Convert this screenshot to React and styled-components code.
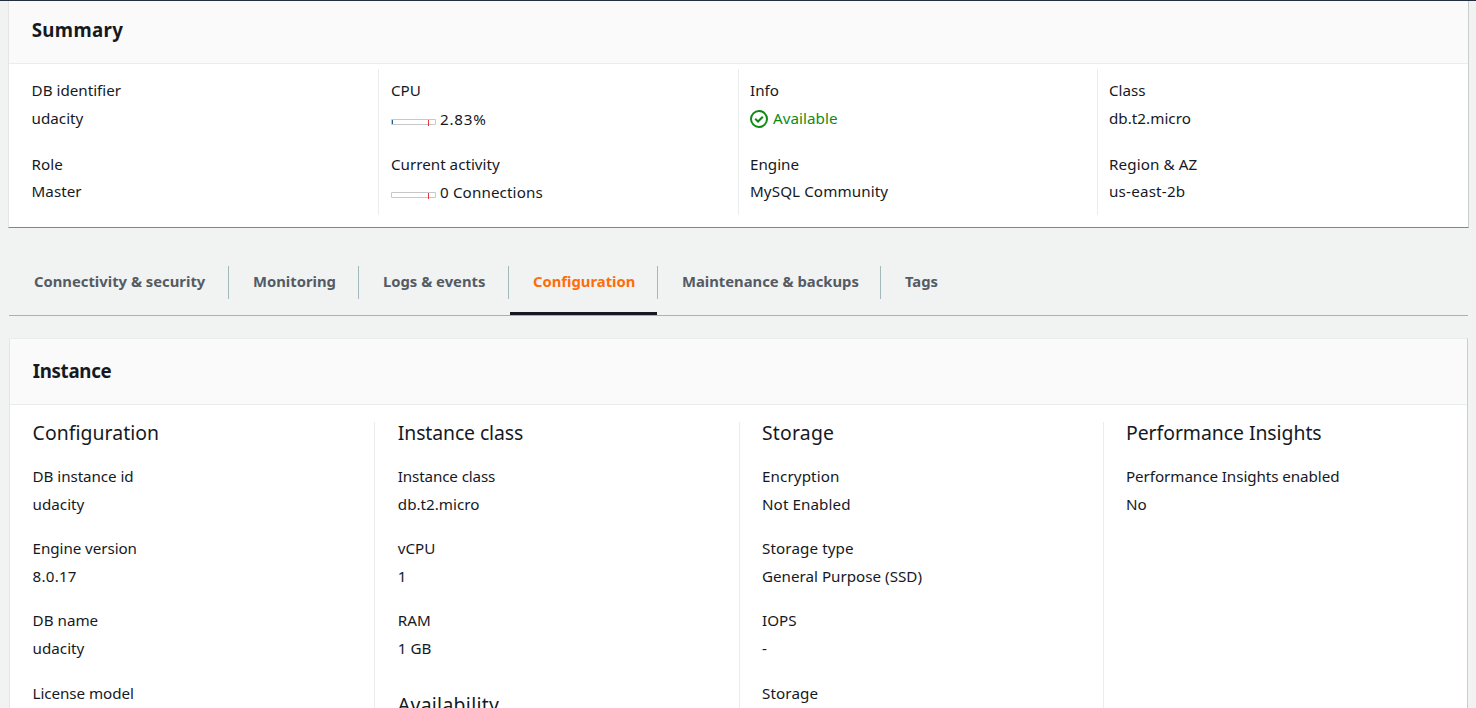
import React from "react";
import styled, { createGlobalStyle, css } from "styled-components";

const GlobalStyle = createGlobalStyle`
  * { box-sizing: border-box; }
  html, body { margin: 0; height: 100%; }
  body {
    overflow: hidden;
    background: #f1f3f3;
    color: #16191f;
    font-family: "Noto Sans", sans-serif;
    font-size: 15.2px;
    line-height: 22px;
  }
`;

const Page = styled.main`
  height: 708px;
  overflow: hidden;
  background: #f1f3f3;
  border-top: 1px solid #232f3e;
`;

const Panel = styled.section`
  background: #fff;
  border-left: 1px solid #e3e6e6;
  border-right: 1px solid #c9cdcd;
`;

const SummaryPanel = styled(Panel)`
  margin: 0 7px 0 8px;
  height: 227px;
  border-bottom: 1px solid #7f8889;
`;

const InstancePanel = styled(Panel)`
  margin: 22px 8px 0 9px;
  height: 500px;
  border-top: 1px solid #eaeded;
`;

const PanelHeader = styled.header`
  height: ${(p) => p.$height}px;
  padding: ${(p) => p.$top}px 0 0 22.7px;
  background: #fafafa;
  border-bottom: 1px solid #eaeded;
`;

const tracked = css`
  letter-spacing: ${(p) => (p.$track ? `${p.$track}px` : "normal")};
  white-space: nowrap;
`;

const PanelTitle = styled.h2`
  margin: 0;
  font-size: 18.7px;
  line-height: 26px;
  font-weight: 700;
  ${tracked}
`;

const Columns = styled.div`
  display: grid;
  grid-template-columns: ${(p) => p.$template};
  padding-top: ${(p) => p.$top}px;
`;

const SummaryColumn = styled.div`
  height: 146px;
  padding: 10px 0 0 ${(p) => p.$inset ?? 11}px;
  border-left: ${(p) => (p.$first ? "0" : "1px solid #eaeded")};
`;

const DetailColumn = styled.div`
  height: 420px;
  padding-left: ${(p) => p.$inset ?? 22}px;
  border-left: ${(p) => (p.$first ? "0" : "1px solid #eaeded")};
`;

const SummaryField = styled.div`
  height: 74px;
`;

const DetailField = styled.div`
  height: 72.25px;
`;

const Label = styled.div`
  height: 22px;
  margin-bottom: ${(p) => p.$gap ?? 6}px;
  ${tracked}
`;

const Value = styled.div`
  display: flex;
  align-items: center;
  height: 22px;
  ${tracked}
`;

const Status = styled(Value)`
  gap: 5px;
  color: #0d8a14;

  svg {
    margin-top: 2px;
  }
`;

const Metric = styled(Value)`
  gap: 4px;
  padding-top: 2px;
`;

const MeterSvg = styled.svg`
  display: block;
  margin-top: 7px;
`;

const ColumnTitle = styled.h3`
  margin: 0 0 18.9px;
  height: 24px;
  font-size: 19.4px;
  line-height: 22px;
  font-weight: 400;
  ${tracked}
`;

const LowerTitle = styled(ColumnTitle)`
  margin: 12px 0 0;
`;

const TabBar = styled.nav`
  display: flex;
  height: 88px;
  margin: 0 8px 0 9px;
  padding-top: 38px;
  border-bottom: 1px solid #a2b4b5;
`;

const Tab = styled.div`
  width: ${(p) => p.$width}px;
`;

const TabLabel = styled.div`
  height: 33px;
  padding-left: ${(p) => (p.$first ? 25 : 24)}px;
  border-right: ${(p) => (p.$last ? "0" : "1px solid #a2b8b9")};
  color: ${(p) => (p.$active ? "#ff6c0a" : "#545b64")};
  font-size: 14.8px;
  line-height: 30px;
  font-weight: 700;
  ${tracked}
`;

const TabMarker = styled.div`
  height: 3px;
  margin: 13px 1px 0;
  background: #16191f;
`;

function Meter({ used }) {
  return (
    <MeterSvg width="45" height="7" viewBox="0 0 45 7">
      <path d="M0.5 0.5H44.5V5.5H0.5Z" fill="#fff" stroke="#c8c8c8" />
      {used && <path d="M1.5 1V5" stroke="#1f5f96" />}
      <path d="M37.5 1V7" stroke="#e8363b" />
    </MeterSvg>
  );
}

function AvailableIcon() {
  return (
    <svg width="18" height="18" viewBox="0 0 18 18" fill="none" stroke="currentColor" strokeWidth="2">
      <circle cx="9" cy="9" r="8" />
      <path d="M5.2 8.8 8 11.5 12.8 6.7" />
    </svg>
  );
}

const tabs = [
  { text: "Connectivity & security", width: 220 },
  { text: "Monitoring", width: 130 },
  { text: "Logs & events", width: 150 },
  { text: "Configuration", width: 149, active: true },
  { text: "Maintenance & backups", width: 223 },
  { text: "Tags", width: 90 },
];

const details = [
  {
    title: "Configuration",
    track: 0.06,
    inset: 22.6,
    fields: [
      { label: "DB instance id", value: "udacity", track: -0.07 },
      { label: "Engine version", value: "8.0.17", track: -0.07, valueTrack: 0.2 },
      { label: "DB name", value: "udacity" },
      { label: "License model", track: -0.07 },
    ],
  },
  {
    title: "Instance class",
    track: -0.1,
    inset: 22.8,
    fields: [
      { label: "Instance class", value: "db.t2.micro", track: -0.13 },
      { label: "vCPU", value: "1" },
      { label: "RAM", value: "1 GB" },
    ],
    next: "Availability",
  },
  {
    title: "Storage",
    track: 0.2,
    fields: [
      { label: "Encryption", value: "Not Enabled", track: 0.1, valueTrack: 0.08 },
      { label: "Storage type", value: "General Purpose (SSD)", track: 0.1 },
      { label: "IOPS", value: "-" },
      { label: "Storage", track: 0.1 },
    ],
  },
  {
    title: "Performance Insights",
    track: -0.04,
    fields: [{ label: "Performance Insights enabled", value: "No", track: -0.07 }],
  },
];

export default function App() {
  return (
    <>
      <GlobalStyle />
      <Page>
        <SummaryPanel>
          <PanelHeader $height={63} $top={16}>
            <PanelTitle $track={0.35}>Summary</PanelTitle>
          </PanelHeader>
          <Columns $template="369px 360px 359px 1fr" $top={5}>
            <SummaryColumn $first $inset={22.6}>
              <SummaryField>
                <Label>DB identifier</Label>
                <Value>udacity</Value>
              </SummaryField>
              <SummaryField>
                <Label $gap={5}>Role</Label>
                <Value>Master</Value>
              </SummaryField>
            </SummaryColumn>
            <SummaryColumn $inset={12}>
              <SummaryField>
                <Label>CPU</Label>
                <Metric $track={0.8}><Meter used />2.83%</Metric>
              </SummaryField>
              <SummaryField>
                <Label $gap={5}>Current activity</Label>
                <Metric $track={0.12}><Meter />0 Connections</Metric>
              </SummaryField>
            </SummaryColumn>
            <SummaryColumn>
              <SummaryField>
                <Label>Info</Label>
                <Status $track={0.05}><AvailableIcon />Available</Status>
              </SummaryField>
              <SummaryField>
                <Label $gap={5}>Engine</Label>
                <Value $track={0.09}>MySQL Community</Value>
              </SummaryField>
            </SummaryColumn>
            <SummaryColumn>
              <SummaryField>
                <Label>Class</Label>
                <Value $track={0.03}>db.t2.micro</Value>
              </SummaryField>
              <SummaryField>
                <Label $gap={5} $track={0.1}>Region &amp; AZ</Label>
                <Value $track={0.2}>us-east-2b</Value>
              </SummaryField>
            </SummaryColumn>
          </Columns>
        </SummaryPanel>
        <TabBar>
          {tabs.map((t, i) => (
            <Tab key={t.text} $width={t.width}>
              <TabLabel $active={t.active} $first={i === 0} $last={i === tabs.length - 1}>{t.text}</TabLabel>
              {t.active && <TabMarker />}
            </Tab>
          ))}
        </TabBar>
        <InstancePanel>
          <PanelHeader $height={66} $top={19}>
            <PanelTitle $track={-0.3}>Instance</PanelTitle>
          </PanelHeader>
          <Columns $template="364px 365px 364px 1fr" $top={17}>
            {details.map((column, i) => (
              <DetailColumn key={column.title} $first={i === 0} $inset={column.inset}>
                <ColumnTitle $track={column.track}>{column.title}</ColumnTitle>
                {column.fields.map((field) => (
                  <DetailField key={field.label}>
                    <Label $track={field.track}>{field.label}</Label>
                    <Value $track={field.valueTrack}>{field.value}</Value>
                  </DetailField>
                ))}
                {column.next && <LowerTitle $track={0.3}>{column.next}</LowerTitle>}
              </DetailColumn>
            ))}
          </Columns>
        </InstancePanel>
      </Page>
    </>
  );
}
